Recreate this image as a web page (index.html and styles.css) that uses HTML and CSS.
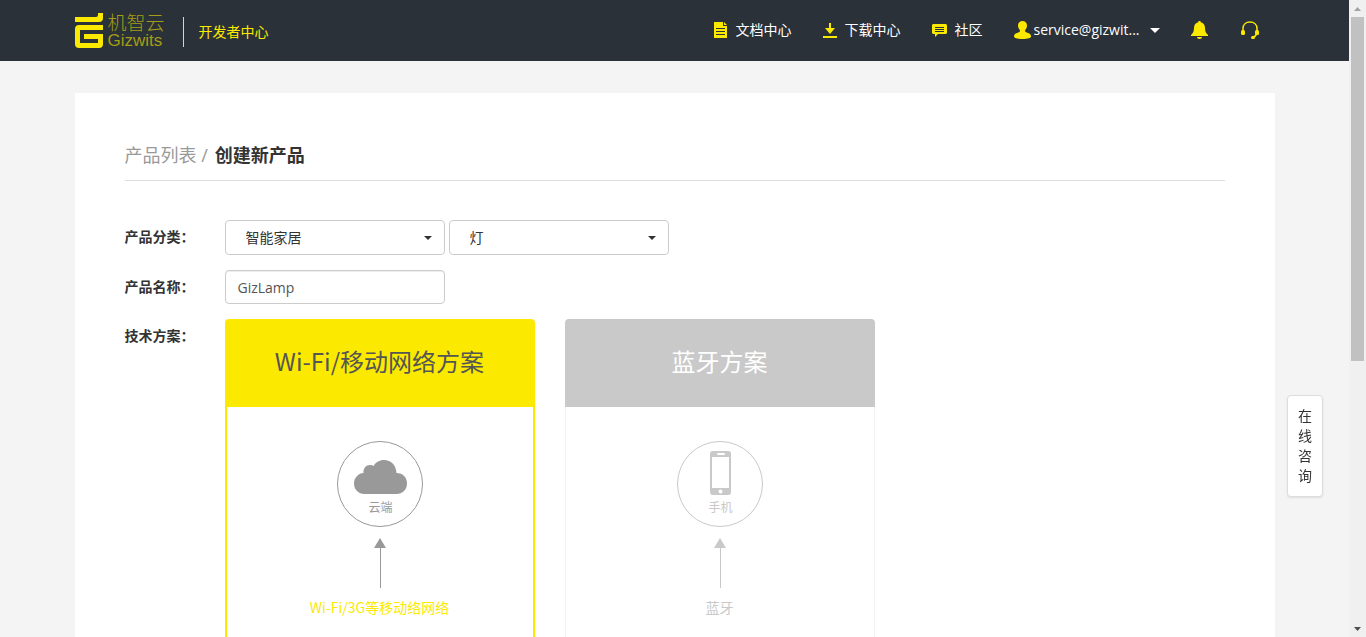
FILE: index.html
```html
<!DOCTYPE html>
<html lang="zh-CN">
<head>
<meta charset="utf-8">
<title>创建新产品 - 机智云开发者中心</title>
<link rel="stylesheet" href="styles.css">
</head>
<body>
<div class="viewport">
  <div class="page">
    <header class="header">
      <div class="container header-inner">
        <a class="logo" href="#">
          <svg class="logo-mark" width="29" height="35" viewBox="0 0 29 35" fill="#fbea00" aria-hidden="true">
            <path d="M0 4h21q2 0 2-2V0h5v5q0 4-4 4H0z"/>
            <path d="M4 12h24v5H5v13h18v-4H9v-5h19v10q0 4-4 4H4q-4 0-4-4V16q0-4 4-4z"/>
          </svg>
          <span class="logo-text"><span class="logo-cn">机智云</span><span class="logo-en">Gizwits</span></span>
        </a>
        <a class="site-name" href="#">开发者中心</a>
        <nav class="nav">
          <a class="nav-link" href="#">
            <svg width="14" height="16" viewBox="0 0 14 16" aria-hidden="true"><path fill="#fbea00" d="M0 0h9v4h4v12H0zM10 0l3 3h-3z"/><path stroke="#2b3138" d="M2 6.500h9M2 9.500h9M2 12.500h9"/></svg>
            文档中心</a>
          <a class="nav-link" href="#">
            <svg width="14" height="15" viewBox="0 0 14 15" fill="#fbea00" aria-hidden="true"><path d="M6 0h2v5h4l-5 6-5-6h4zM0 13h14v2H0z"/></svg>
            下载中心</a>
          <a class="nav-link" href="#">
            <svg width="15" height="14" viewBox="0 0 15 14" aria-hidden="true"><path fill="#fbea00" d="M1 1h13l1 1v8l-1 1H6l-3 3v-3H1l-1-1V2z"/><path stroke="#2b3138" d="M3 4.500h9M3 6.500h9M3 8.500h9"/></svg>
            社区</a>
          <button class="account" type="button">
            <svg width="17" height="18" viewBox="0 0 17 18" fill="#fbea00" aria-hidden="true"><path d="M8.500 0C11 0 13 1.500 13 4.500c0 2-1 3.500-2 5 0 1.500 1 1.800 3 2.500s3 1.500 3 3.500c0 1.500-3 2.500-8.500 2.500S0 17 0 15.500C0 13.500 1 12.700 3 12s3-1 3-2.500c-1-1.500-2-3-2-5C4 1.500 6 0 8.500 0z"/></svg>
            <span>service@gizwit...</span>
            <svg class="account-caret" width="10" height="5" viewBox="0 0 10 5" fill="#fff" aria-hidden="true"><path d="M0 0h10L5 5z"/></svg>
          </button>
          <button class="icon-button bell" type="button" aria-label="消息">
            <svg width="17" height="18" viewBox="0 0 17 18" fill="#fbea00" aria-hidden="true"><path d="M8.500 0c.8 0 1.300.5 1.300 1.200C12.500 2 14 4 14 7c0 3 .8 5 3 7v1H0v-1c2.200-2 3-4 3-7 0-3 1.500-5 4.200-5.800C7.200.5 7.700 0 8.500 0zM6 16h5c0 1.300-1 2-2.500 2S6 17.300 6 16z"/></svg>
          </button>
          <button class="icon-button" type="button" aria-label="客服">
            <svg width="18" height="18" viewBox="0 0 18 18" aria-hidden="true"><path fill="none" stroke="#fbea00" stroke-width="1.500" d="M2 10V7.500C2 3.500 5 1 9 1s7 2.500 7 6.500V10M15.500 13q-1 3-4 3"/><g fill="#fbea00"><rect y="9" width="4" height="5" rx="1.500"/><rect x="14" y="9" width="4" height="5" rx="1.500"/><rect x="10" y="15" width="4" height="3" rx="1.500"/></g></svg>
          </button>
        </nav>
      </div>
    </header>

    <main class="container panel">
      <div class="crumbs"><a href="#">产品列表 /</a> <h1>创建新产品</h1></div>
      <form class="form">
        <label class="label" for="category">产品分类<span class="colon">：</span></label>
        <div class="fields">
          <div class="select">
            <select id="category"><option>智能家居</option></select>
            <svg width="8" height="4" viewBox="0 0 8 4" fill="#333" aria-hidden="true"><path d="M0 0h8L4 4z"/></svg>
          </div>
          <div class="select">
            <select aria-label="产品子分类"><option>灯</option></select>
            <svg width="8" height="4" viewBox="0 0 8 4" fill="#333" aria-hidden="true"><path d="M0 0h8L4 4z"/></svg>
          </div>
        </div>
        <label class="label" for="name">产品名称<span class="colon">：</span></label>
        <input class="text-input" id="name" type="text" value="GizLamp">
        <span class="label" id="plan-label">技术方案<span class="colon">：</span></span>
        <div class="plans" role="group" aria-labelledby="plan-label">
          <section class="plan plan-active">
            <h2 class="plan-title">Wi-Fi/移动网络方案</h2>
            <div class="plan-body">
              <div class="node">
                <svg width="54" height="35" viewBox="0 0 54 35" fill="currentColor" aria-hidden="true"><path d="M10.500 34C4.500 34 0 29.500 0 23.500c0-5.500 4-10 9.500-10.500C9 8.500 12 5 16 5c1.500 0 2.500.4 3.500 1C21.500 2.500 25.500 0 30 0c7 0 12 5 12.500 13C49 13 53 17.500 53 23.500S48.500 34 42.500 34z"/></svg>
                <span>云端</span>
              </div>
              <svg class="arrow" width="12" height="50" viewBox="0 0 12 50" aria-hidden="true"><path fill="currentColor" d="M6 0l6 10H0z"/><path stroke="currentColor" d="M6.500 9v41"/></svg>
              <p class="link-name">Wi-Fi/3G等移动络网络</p>
            </div>
          </section>
          <section class="plan">
            <h2 class="plan-title">蓝牙方案</h2>
            <div class="plan-body">
              <div class="node phone">
                <svg width="21" height="44" viewBox="0 0 21 44" aria-hidden="true"><rect width="21" height="44" rx="3" fill="currentColor"/><path fill="#fff" d="M2 6h17v31H2z"/><rect x="7" y="2" width="8" height="2" rx="1" fill="#fff"/><circle cx="10.500" cy="40.500" r="2" fill="#fff"/></svg>
                <span>手机</span>
              </div>
              <svg class="arrow" width="12" height="50" viewBox="0 0 12 50" aria-hidden="true"><path fill="currentColor" d="M6 0l6 10H0z"/><path stroke="currentColor" d="M6.500 9v41"/></svg>
              <p class="link-name">蓝牙</p>
            </div>
          </section>
        </div>
      </form>
    </main>
    <button class="consult" type="button">在线咨询</button>
  </div>
  <div class="scrollbar" aria-hidden="true">
    <svg width="17" height="17" viewBox="0 0 17 17" fill="#a3a3a3"><path d="M5 11h7L8.500 7z"/></svg>
    <div class="scroll-thumb"></div>
    <svg class="scroll-down" width="17" height="17" viewBox="0 0 17 17" fill="#505050"><path d="M5 7h7l-3.500 4z"/></svg>
  </div>
</div>
</body>
</html>
```
FILE: styles.css
```css
* { box-sizing: border-box; }
body {
  margin: 0;
  font: 14px/20px "Open Sans", "Noto Sans CJK SC", sans-serif;
  color: #333;
  background: #f4f4f4;
}
a { color: inherit; text-decoration: none; }
button { padding: 0; border: 0; background: none; font: inherit; color: inherit; cursor: pointer; }
h1, h2, p { margin: 0; }
svg { display: block; flex: none; }

.viewport { display: flex; height: 100vh; overflow: hidden; }
.page { flex: 1; min-width: 0; overflow: hidden; }
.container { max-width: 1200px; margin: 0 auto; }

.header { background: #2b3138; }
.header-inner { display: flex; align-items: center; height: 61px; padding-bottom: 1px; }
.logo { display: flex; align-items: center; gap: 4px; }
.logo-text { display: flex; flex-direction: column; padding-top: 2px; color: #a59d14; }
.logo-cn { font-size: 19px; line-height: 20px; font-weight: 300; }
.logo-en { font: 17px/16px "Liberation Sans", sans-serif; }
.site-name {
  margin: 3px 0 0 18px;
  padding: 5px 0 5px 15px;
  border-left: 1px solid #fbea00;
  color: #fbea00;
}
.nav { display: flex; align-items: center; margin-left: auto; padding-right: 16px; color: #fff; }
.nav-link { display: flex; align-items: center; gap: 7px; margin-right: 32px; }
.account { display: flex; align-items: center; gap: 2px; margin-right: 31px; }
.account-caret { margin-left: 8px; }
.bell { margin-right: 33px; }

.panel { margin-top: 32px; padding: 50px; background: #fff; min-height: 100vh; }
.crumbs {
  display: flex;
  gap: 7px;
  padding-bottom: 13px;
  border-bottom: 1px solid #ddd;
  font-size: 18px;
  line-height: 24px;
  color: #999;
}
.crumbs h1 { font-size: 18px; line-height: 24px; font-weight: 700; color: #333; }

.form { display: grid; grid-template-columns: 100px 1fr; row-gap: 15px; margin-top: 39px; }
.label { padding-top: 7px; font-weight: 700; }
.colon { font-family: "Noto Sans CJK TC", sans-serif; line-height: 1; }
.fields { display: flex; gap: 4px; }
.select { position: relative; }
.select select, .text-input {
  width: 220px;
  border: 1px solid #ccc;
  border-radius: 4px;
  background: #fff;
  font: inherit;
}
.select select { display: block; height: 35px; padding: 0 30px 0 20px; appearance: none; color: #333; }
.select svg { position: absolute; right: 13px; top: 16px; pointer-events: none; }
.text-input { height: 34px; padding: 0 12px; color: #555; box-shadow: inset 0 1px 1px #eee; }

.plans { display: flex; gap: 30px; }
.plan { width: 310px; color: #c9c9c9; }
.plan-title {
  padding: 26px 0 30px;
  border-radius: 4px 4px 0 0;
  background: #c9c9c9;
  color: #fff;
  font: 24px/32px "Noto Sans CJK SC", sans-serif;
  text-align: center;
}
.plan-body {
  display: flex;
  flex-direction: column;
  align-items: center;
  min-height: 400px;
  padding-top: 34px;
  border: solid #f2f2f2;
  border-width: 0 1px 1px;
  font-family: "Noto Sans CJK SC", sans-serif;
}
.plan-active { color: #999; }
.plan-active .plan-title { background: #fbea00; color: #555; }
.plan-active .plan-body { border-color: #fbea00; border-width: 0 2px 2px; }
.plan-active .link-name { color: #fbea00; }
.node {
  display: flex;
  flex-direction: column;
  align-items: center;
  gap: 3px;
  width: 86px;
  height: 86px;
  padding: 18px 0 0 2px;
  border: 1px solid currentColor;
  border-radius: 50%;
  font-size: 12px;
  line-height: 18px;
}
.phone { padding-top: 9px; }
.arrow { margin-top: 11px; }
.link-name { margin-top: 9px; }

.consult {
  position: fixed;
  right: 43px;
  top: 395px;
  width: 36px;
  padding: 10px;
  border: 1px solid #ddd;
  border-radius: 4px;
  background: #fff;
  box-shadow: 0 1px 2px #ddd;
  color: #333;
  word-break: break-all;
}

.scrollbar { display: flex; flex-direction: column; width: 17px; background: #f0f0f0; }
.scroll-thumb { height: 54%; margin: 0 2px; background: #c1c1c1; }
.scroll-down { margin-top: auto; }
```
